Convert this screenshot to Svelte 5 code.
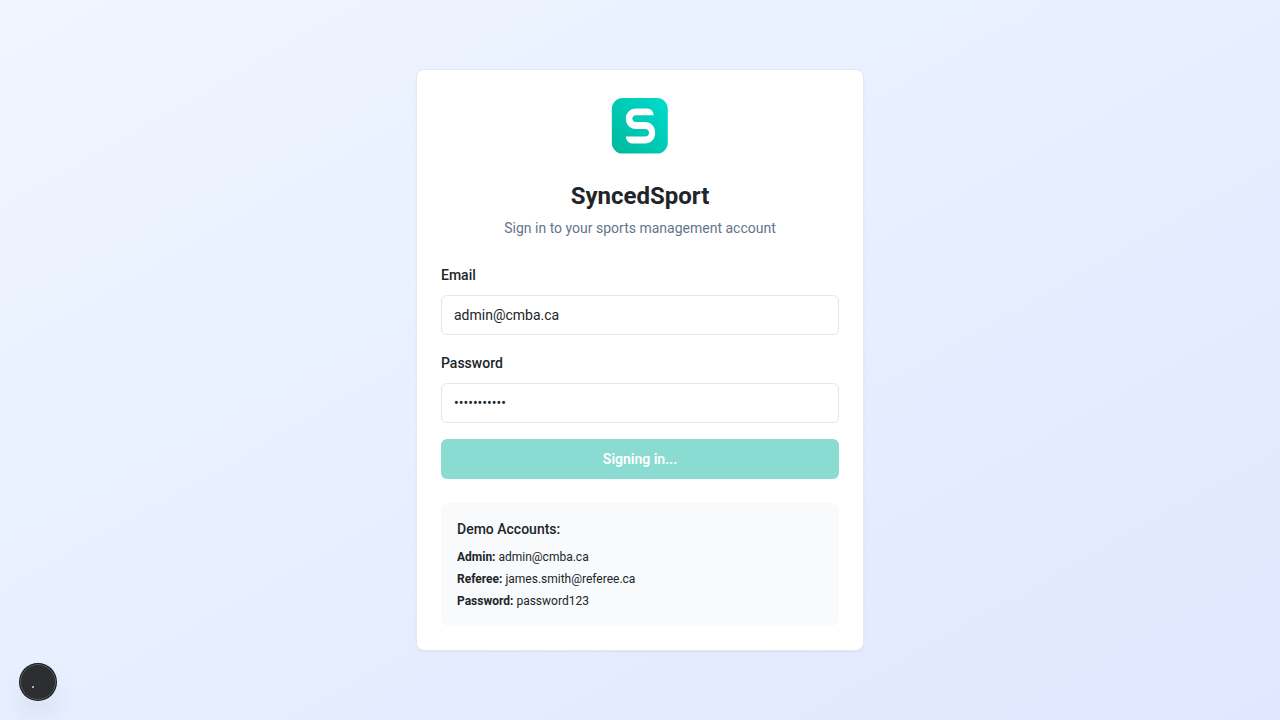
<script>
  let email = $state('admin@cmba.ca');
  let password = $state('password123');
  let loading = $state(true);

  const accounts = [
    { label: 'Admin', value: 'admin@cmba.ca' },
    { label: 'Referee', value: 'james.smith@referee.ca' },
    { label: 'Password', value: 'password123' }
  ];
</script>

<main class="page">
  <section class="card">
    <header class="header">
      <svg class="logo" viewBox="0 0 64 64" aria-hidden="true">
        <defs>
          <linearGradient id="brand" x1="0" y1="1" x2="1" y2="0">
            <stop offset="0" stop-color="#00b89c" />
            <stop offset="1" stop-color="#00dccf" />
          </linearGradient>
        </defs>
        <rect x="3.8" y="4" width="56" height="55.6" rx="11" fill="url(#brand)" />
        <path
          d="M45.6 21.2C45.6 17.5 43 14.6 39 14.6H28C22 14.6 17.8 19 17.8 24.8S22 35 28 35H37.3C39.5 35 41 36.5 41 38.7S39.5 42.5 37.3 42.5H17.8C18 46.5 21 49.6 25 49.6H37C43 49.6 47.2 45 47.2 38.8S43 28 37 28H28C25.8 28 24.4 26.6 24.4 24.6S25.8 21.2 28 21.2Z"
          fill="#fff"
        />
      </svg>
      <h1>SyncedSport</h1>
      <p>Sign in to your sports management account</p>
    </header>

    <form class="form" onsubmit={(e) => e.preventDefault()}>
      <div class="field">
        <label for="email">Email</label>
        <input id="email" type="email" bind:value={email} required />
      </div>
      <div class="field">
        <label for="password">Password</label>
        <input id="password" type="password" bind:value={password} required />
      </div>
      <button class="submit" type="submit" disabled={loading}>
        {loading ? 'Signing in...' : 'Sign In'}
      </button>
    </form>

    <div class="demo">
      <h2>Demo Accounts:</h2>
      {#each accounts as account}
        <p><strong>{account.label}:</strong> {account.value}</p>
      {/each}
    </div>
  </section>

  <button class="badge" type="button" aria-label="Open developer tools">
    <span class="dot"></span>
  </button>
</main>

<style>
  :global(body) {
    margin: 0;
  }

  .page {
    box-sizing: border-box;
    min-height: 100vh;
    display: flex;
    align-items: center;
    justify-content: center;
    padding: 16px;
    background: linear-gradient(to bottom right, #eff6ff, #e0e7ff);
    color: #212529;
    font-family: Roboto, sans-serif;
    font-size: 14px;
    line-height: 1.5;
  }

  .page * {
    box-sizing: border-box;
  }

  h1,
  h2,
  p {
    margin: 0;
  }

  .card {
    width: 100%;
    max-width: 448px;
    padding: 24px;
    background: #fff;
    border: 1px solid #e2e8f0;
    border-radius: 8px;
    box-shadow: 0 1px 2px rgb(0 0 0 / 5%);
  }

  .header {
    display: flex;
    flex-direction: column;
    align-items: center;
    text-align: center;
    margin-bottom: 24px;
  }

  .logo {
    width: 64px;
    height: 64px;
    margin-bottom: 20px;
  }

  h1 {
    margin-bottom: 4px;
    font-size: 24px;
    font-weight: 700;
    line-height: 36px;
  }

  .header p {
    color: #64748b;
  }

  .form {
    display: flex;
    flex-direction: column;
    gap: 16px;
  }

  .field {
    display: flex;
    flex-direction: column;
    gap: 8px;
  }

  label {
    font-weight: 500;
    line-height: 24px;
  }

  input {
    width: 100%;
    height: 40px;
    padding: 8px 12px;
    border: 1px solid #e2e8f0;
    border-radius: 6px;
    background: #fff;
    color: inherit;
    font: inherit;
    outline: none;
  }

  .submit {
    height: 40px;
    border: 0;
    border-radius: 6px;
    background: #14b8a6;
    color: #fff;
    font: inherit;
    font-weight: 600;
  }

  .submit:disabled {
    background: #8adbd1;
  }

  .demo {
    display: flex;
    flex-direction: column;
    gap: 4px;
    margin-top: 24px;
    padding: 16px;
    border-radius: 8px;
    background: #f8fafc;
    font-size: 12px;
  }

  h2 {
    margin-bottom: 4px;
    font-size: 14px;
    font-weight: 500;
  }

  .badge {
    position: fixed;
    left: 20px;
    bottom: 20px;
    width: 36px;
    height: 36px;
    padding: 0;
    border: 1px solid #58595c;
    border-radius: 50%;
    background: #2d2e31;
    box-shadow:
      0 0 0 1px #17181a,
      0 16px 32px -8px rgb(0 0 0 / 24%);
  }

  .dot {
    position: absolute;
    left: 11px;
    bottom: 11px;
    width: 2px;
    height: 2px;
    background: #b0b0b0;
  }
</style>
